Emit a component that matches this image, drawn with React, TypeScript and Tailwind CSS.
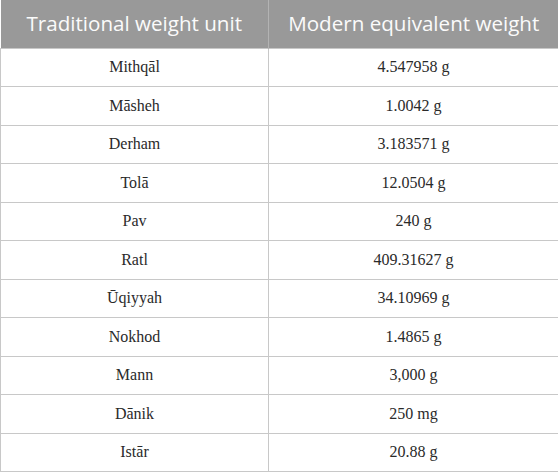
const rows: [string, string][] = [
  ["Mithqāl", "4.547958 g"],
  ["Māsheh", "1.0042 g"],
  ["Derham", "3.183571 g"],
  ["Tolā", "12.0504 g"],
  ["Pav", "240 g"],
  ["Ratl", "409.31627 g"],
  ["Ūqiyyah", "34.10969 g"],
  ["Nokhod", "1.4865 g"],
  ["Mann", "3,000 g"],
  ["Dānik", "250 mg"],
  ["Istār", "20.88 g"],
];

export default function App() {
  return (
    <div className="w-[558px] h-[473px] bg-white">
      <table className="w-[558px] border-collapse table-fixed">
        <colgroup>
          <col className="w-[268px]" />
          <col className="w-[290px]" />
        </colgroup>
        <thead>
          <tr className="h-[48px] bg-[#999999] text-[#fbfbfb] text-[20.6px] font-['Open_Sans',sans-serif]">
            <th className="font-normal text-center border-r border-[#b3b3b3]">
              Traditional weight unit
            </th>
            <th className="font-normal text-center">Modern equivalent weight</th>
          </tr>
        </thead>
        <tbody className="font-['Liberation_Serif',serif] text-[16px] text-[#2a2a2a]">
          {rows.map(([unit, weight]) => (
            <tr key={unit} className="h-[38.5px]">
              <td className="text-center border border-[#c8c8c8]">{unit}</td>
              <td className="text-center border border-[#c8c8c8]">{weight}</td>
            </tr>
          ))}
        </tbody>
      </table>
    </div>
  );
}
